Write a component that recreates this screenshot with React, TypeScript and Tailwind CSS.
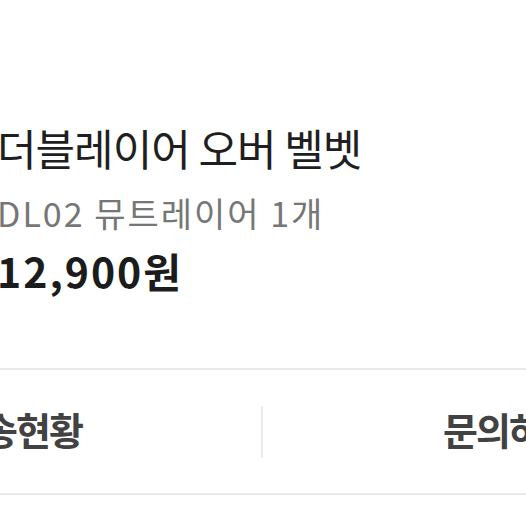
export default function App() {
  return (
    <div className="w-[526px] h-[526px] bg-white overflow-hidden font-['Noto_Sans_CJK_KR','Noto_Sans',sans-serif]">
      <div className="pt-[122px] -ml-[3px]">
        <div className="text-[43px] leading-[50px] tracking-[-1px] text-[#1f1f1f] whitespace-nowrap">더블레이어 오버 벨벳</div>
        <div className="mt-[21px] text-[34px] leading-[40px] tracking-[2px] text-[#767676] whitespace-nowrap">DL02 뮤트레이어 1개</div>
        <div className="mt-[13px] text-[41px] leading-[48px] tracking-[2px] font-bold text-[#1c1c1c] whitespace-nowrap">12,900원</div>
      </div>
      <div className="mt-[74px] h-[2px] bg-[#e9e9e9]"></div>
      <div className="h-[123px] flex items-center">
        <div className="w-[261px] shrink-0 flex justify-start overflow-hidden">
          <span className="-ml-[50px] -mt-[6px] shrink-0 text-[38px] leading-[48px] tracking-[-2px] font-semibold text-[#424242] whitespace-nowrap">배송현황</span>
        </div>
        <div className="w-[2px] shrink-0 h-[52px] bg-[#ececec]"></div>
        <div className="flex-1 flex justify-start overflow-hidden">
          <span className="ml-[180px] -mt-[6px] shrink-0 text-[38px] leading-[48px] tracking-[-2px] font-semibold text-[#424242] whitespace-nowrap">문의하기</span>
        </div>
      </div>
      <div className="h-[2px] bg-[#e9e9e9]"></div>
    </div>
  );
}
